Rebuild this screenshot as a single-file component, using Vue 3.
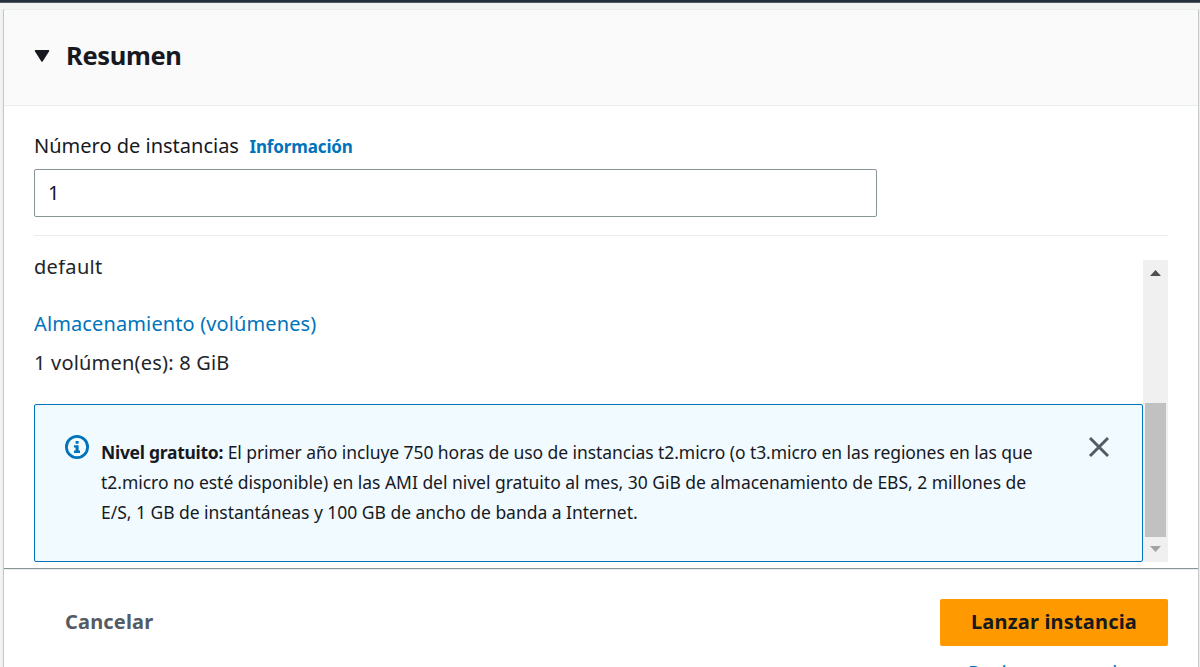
<script setup>
import { ref } from 'vue'

const instances = ref('1')
const notice = [
  'El primer año incluye 750 horas de uso de instancias t2.micro (o t3.micro en las regiones en las que',
  't2.micro no esté disponible) en las AMI del nivel gratuito al mes, 30 GiB de almacenamiento de EBS, 2 millones de',
  'E/S, 1 GB de instantáneas y 100 GB de ancho de banda a Internet.',
]
</script>

<template>
  <div class="page">
    <div class="topbar"></div>
    <section class="panel">
      <header class="head">
        <svg class="caret" width="16" height="14" viewBox="0 0 16 14"><path d="M1.5 1.8h13L8 12z" /></svg>
        <h2>Resumen</h2>
      </header>
      <div class="field">
        <div class="label-row">
          <label for="n">Número de instancias</label>
          <a class="info">Información</a>
        </div>
        <input id="n" v-model="instances" type="text" />
      </div>
      <div class="scroll">
        <div class="content">
          <p class="text first">default</p>
          <a class="storage">Almacenamiento (volúmenes)</a>
          <p class="text volume">1 volúmen(es): 8 GiB</p>
          <div class="alert">
            <svg class="icon" width="24" height="24" viewBox="0 0 24 24">
              <circle cx="12" cy="12" r="10.6" fill="none" stroke="#0073bb" stroke-width="2.8" />
              <path d="M10.6 6h3v2.7h-3zM9 10.2h4.6v5.4H15V18H9v-2.4h1.6v-3H9z" fill="#0073bb" />
            </svg>
            <div class="message">
              <div class="l1"><b>Nivel gratuito:</b>&#32;<span>{{ notice[0] }}</span></div>
              <div class="l2">{{ notice[1] }}</div>
              <div class="l3">{{ notice[2] }}</div>
            </div>
            <svg class="close" width="22" height="22" viewBox="0 0 22 22"><path d="M2 2l18 18M20 2L2 20" /></svg>
          </div>
        </div>
        <div class="bar">
          <svg width="11" height="6" viewBox="0 0 11 6"><path d="M5.5 0L11 6H0z" fill="#505050" /></svg>
          <div class="thumb"></div>
          <svg width="11" height="6" viewBox="0 0 11 6"><path d="M0 0h11L5.5 6z" fill="#a3a3a3" /></svg>
        </div>
      </div>
      <footer class="foot">
        <button class="cancel">Cancelar</button>
        <div class="actions">
          <button class="launch">Lanzar instancia</button>
          <a class="review">Revisar comandos</a>
        </div>
      </footer>
    </section>
  </div>
</template>

<style>
body { margin: 0; overflow: hidden; }
</style>

<style scoped>
.page {
  box-sizing: border-box;
  height: 667px;
  overflow: hidden;
  background: #f2f3f3;
  font-family: "Noto Sans", "Open Sans", sans-serif;
  color: #16191f;
  display: flex;
  flex-direction: column;
}
.topbar { height: 2px; flex: none; background: #232f3e; border-bottom: 1px solid #545b64; margin-bottom: 6px; }
.panel {
  flex: 1;
  min-height: 0;
  margin: 0 1px 0 3px;
  border: 1px solid #c3c8c8;
  border-top-color: #eaeded;
  border-bottom: 0;
  box-shadow: 0 1px 1px #d5dbdb;
  background: #fff;
  display: flex;
  flex-direction: column;
}
.head {
  box-sizing: border-box;
  height: 96px;
  flex: none;
  background: #fafafa;
  border-bottom: 1px solid #eaeded;
  display: flex;
  align-items: center;
  padding: 0 30px 3px;
}
.caret path { fill: #16191f; stroke: #16191f; stroke-width: 1.5; stroke-linejoin: round; }
h2 { margin: 0 0 2px 16px; font-size: 25.5px; line-height: 36px; font-weight: 700; letter-spacing: -0.35px; }
.field {
  box-sizing: border-box;
  height: 130px;
  flex: none;
  margin: 0 30px;
  padding-top: 25px;
  border-bottom: 1px solid #eaeded;
}
.label-row { display: flex; align-items: baseline; height: 38px; line-height: 30px; }
label { font-size: 20px; }
.info { font-size: 17px; font-weight: 700; color: #0073bb; margin-left: 10.5px; letter-spacing: -0.13px; }
input {
  display: block;
  box-sizing: border-box;
  width: 843px;
  height: 48px;
  padding: 0 13px 2px;
  border: 1px solid #879596;
  border-radius: 2px;
  font: 20px "Noto Sans", sans-serif;
  color: #16191f;
  background: #fff;
  outline: none;
}
.scroll { height: 302px; margin: 24px 30px 0; flex: none; display: flex; overflow: hidden; }
.content { flex: 1; }
.text { margin: 0; font-size: 20px; line-height: 30px; color: #21242a; }
.first { margin-top: -8px; height: 57px; letter-spacing: 0.3px; }
.storage { display: block; font-size: 20px; line-height: 30px; color: #0073bb; letter-spacing: 0.12px; }
.volume { margin-top: 9px; height: 56px; letter-spacing: 0.2px; }
.alert {
  box-sizing: border-box;
  height: 158px;
  border: 1px solid #0073bb;
  border-radius: 2px;
  background: #f1faff;
  display: flex;
  padding: 30px;
}
.icon { flex: none; }
.message { flex: 1; margin: 2px 0 0 12px; font-size: 17.5px; line-height: 30px; white-space: nowrap; }
.l1 { letter-spacing: -0.07px; }
.l1 b { letter-spacing: -0.28px; }
.l2, .l3 { letter-spacing: -0.03px; }
.close { flex: none; margin: 1px 2px 0 0; }
.close path { fill: none; stroke: #545b64; stroke-width: 3; }
.bar {
  box-sizing: border-box;
  width: 25px;
  background: #f0f0f0;
  display: flex;
  flex-direction: column;
  align-items: center;
  justify-content: space-between;
  padding: 10px 0;
}
.thumb { width: 21px; height: 134px; margin-top: auto; margin-bottom: 9px; background: #c1c1c1; }
.foot {
  flex: none;
  margin-top: 6px;
  height: 100px;
  box-sizing: border-box;
  border-top: 1px solid #879596;
  box-shadow: inset 0 1px #eaeded;
  padding: 30px 30px 0 61px;
  display: flex;
  align-items: flex-start;
  justify-content: space-between;
}
button { border: 0; padding: 0 0 2px; font: 700 20px "Noto Sans", sans-serif; height: 47px; letter-spacing: 0.18px; }
.cancel { background: none; color: #545b64; }
.launch { width: 228px; background: #ff9900; border-radius: 2px; color: #16191f; white-space: nowrap; }
.actions { display: flex; flex-direction: column; }
.review { font-size: 20px; line-height: 28px; color: #0073bb; margin: 13px 0 0 28px; white-space: nowrap; }
</style>
